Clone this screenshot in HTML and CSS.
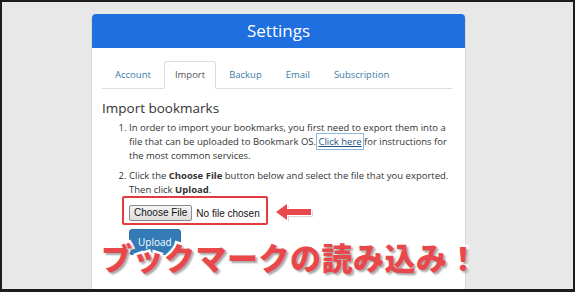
FILE: index.html
```html
<!DOCTYPE html>
<html lang="en">
<head>
    <meta charset="UTF-8">
    <title>Settings - Import</title>
    <link rel="stylesheet" href="styles.css">
</head>
<body>
    <div class="frame">
        <div class="card">
            <div class="card-header">Settings</div>
            <div class="card-body">
                <ul class="tabs">
                    <li class="tab">Account</li>
                    <li class="tab active">Import</li>
                    <li class="tab">Backup</li>
                    <li class="tab">Email</li>
                    <li class="tab">Subscription</li>
                </ul>

                <h3 class="section-title">Import bookmarks</h3>
                <ol class="steps">
                    <li>In order to import your bookmarks, you first need to export them into a file that can be uploaded to Bookmark OS. <a href="#" class="focus-link">Click here</a> for instructions for the most common services.</li>
                    <li>Click the <b>Choose File</b> button below and select the file that you exported. Then click <b>Upload</b>.</li>
                </ol>

                <div class="file-row">
                    <span class="file-btn">Choose File</span>
                    <span class="file-name">No file chosen</span>
                </div>
                <button class="upload-btn">Upload</button>
            </div>
        </div>

        <!-- annotations drawn over the screenshot -->
        <div class="mark-box"></div>
        <svg class="mark-arrow" width="42" height="22" viewBox="0 0 42 22">
            <path d="M3 11 L14 3 L14 8 L38 8 L38 14 L14 14 L14 19 Z" fill="#9a9a9a" transform="translate(1.5,1.5)"/>
            <path d="M3 11 L14 3 L14 8 L38 8 L38 14 L14 14 L14 19 Z" fill="#e8474b" stroke="#fff" stroke-width="2.5" stroke-linejoin="round" paint-order="stroke"/>
        </svg>
        <div class="caption">ブックマークの読み込み！</div>
    </div>
</body>
</html>
```

FILE: styles.css
```css
html {
    background-color: #1c1c1c;
}
body {
    margin: 0;
    padding: 0;
    font-family: 'Open Sans', 'Noto Sans', sans-serif;
    color: #333;
}
.frame {
    position: relative;
    width: 571px;
    height: 287px;
    margin: 2px 2px 3px 2px;
    padding-top: 12px;
    box-sizing: border-box;
    background-color: #e8e8e8;
    overflow: hidden;
}
.card {
    margin-left: 89px;
    width: 375px;
    min-height: 300px;
    box-sizing: border-box;
    background: #fff;
    border: 1px solid #d8d8d8;
    border-top: none;
    border-radius: 4px 4px 0 0;
}
.card-header {
    height: 34px;
    line-height: 33px;
    background-color: #1f6fe0;
    color: #fff;
    text-align: center;
    font-size: 17px;
    border-radius: 4px 4px 0 0;
}
.card-body {
    padding: 13px 13px 0 10px;
}
.tabs {
    display: flex;
    list-style: none;
    margin: 0;
    padding: 0;
    border-bottom: 1px solid #ddd;
}
.tab {
    padding: 0 10px;
    line-height: 26px;
    margin-right: 2px;
    margin-bottom: -1px;
    font-size: 9.5px;
    color: #3a7ca8;
    border: 1px solid transparent;
    border-radius: 3px 3px 0 0;
}
.tab:first-child {
    padding-left: 12px;
}
.tab.active {
    color: #555;
    border-color: #ddd;
    border-bottom-color: #fff;
}
.section-title {
    margin: 10px 0 4px;
    font-size: 13.5px;
    line-height: 18px;
    font-weight: 400;
}
.steps {
    margin: 0;
    padding-left: 27px;
    font-size: 9.5px;
    line-height: 14px;
}
.steps li {
    margin-bottom: 6px;
}
.steps li:last-child {
    margin-bottom: 0;
}
.focus-link {
    color: #23527c;
    outline: 1px solid #8fb8e0;
    outline-offset: 1px;
}
.file-row {
    display: flex;
    align-items: center;
    gap: 4px;
    margin: 8px 0 0 27px;
    font-family: 'Liberation Sans', Arial, sans-serif;
    font-size: 10px;
    color: #111;
}
.file-btn {
    padding: 0 4px;
    height: 14px;
    line-height: 13px;
    border: 1px solid #8a8a8a;
    border-radius: 2px;
    background: linear-gradient(#f4f4f4, #dedede);
}
.upload-btn {
    display: block;
    margin: 8px 0 0 27px;
    padding: 5px 8px;
    font-family: 'Open Sans', sans-serif;
    font-size: 10px;
    color: #fff;
    background-color: #337ab7;
    border: 1px solid #2e6da4;
    border-radius: 3px;
}
.mark-box {
    position: absolute;
    left: 120px;
    top: 194px;
    width: 142px;
    height: 25px;
    border: 2px solid #e53a3f;
    border-radius: 2px;
}
.mark-arrow {
    position: absolute;
    left: 271px;
    top: 199px;
}
.caption {
    position: absolute;
    left: 99px;
    top: 239px;
    font-family: 'Noto Sans CJK JP', sans-serif;
    font-weight: 900;
    font-size: 31px;
    line-height: 1;
    letter-spacing: 0.5px;
    color: #e8474b;
    -webkit-text-stroke: 5px #fff;
    paint-order: stroke fill;
    text-shadow: 2px 2px 2px rgba(0, 0, 0, 0.35);
    white-space: nowrap;
}
```
